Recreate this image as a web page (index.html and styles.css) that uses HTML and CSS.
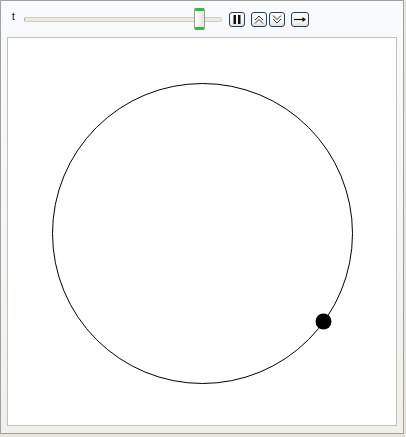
FILE: index.html
```html
<!DOCTYPE html>
<html>
<head>
<meta charset="utf-8">
<link rel="stylesheet" href="styles.css">
</head>
<body>
<div class="panel">
  <div class="controls">
    <span class="label">t</span>
    <div class="slider">
      <div class="track"></div>
      <div class="thumb"></div>
    </div>
    <button class="btn pause" aria-label="pause">
      <svg width="14" height="13" viewBox="0 0 14 13"><rect x="3.5" y="2" width="2.5" height="9" fill="#111"/><rect x="8" y="2" width="2.5" height="9" fill="#111"/></svg>
    </button>
    <button class="btn up" aria-label="faster">
      <svg width="14" height="13" viewBox="0 0 14 13"><path d="M3 7 L7 3 L11 7 M3 10.5 L7 6.5 L11 10.5" fill="none" stroke="#333" stroke-width="1"/></svg>
    </button>
    <button class="btn down" aria-label="slower">
      <svg width="14" height="13" viewBox="0 0 14 13"><path d="M3 2.5 L7 6.5 L11 2.5 M3 6 L7 10 L11 6" fill="none" stroke="#333" stroke-width="1"/></svg>
    </button>
    <button class="btn dir" aria-label="direction">
      <svg width="16" height="13" viewBox="0 0 16 13"><path d="M2 6.5 H12" stroke="#111" stroke-width="1.2"/><path d="M10.5 4 L14 6.5 L10.5 9 Z" fill="#111"/></svg>
    </button>
  </div>
  <div class="view">
    <svg width="388" height="387" viewBox="0 0 388 387">
      <circle cx="194.5" cy="195.5" r="150" fill="none" stroke="#000" stroke-width="1"/>
      <circle cx="315.5" cy="283.5" r="8" fill="#000"/>
    </svg>
  </div>
</div>
</body>
</html>
```
FILE: styles.css
```css
html, body {
  margin: 0;
  padding: 0;
}
body {
  background: #e8e6da;
  width: 406px;
  height: 437px;
  font-family: "Liberation Sans", Arial, sans-serif;
}
.panel {
  width: 402px;
  height: 432px;
  border: 1px solid #9ba2a6;
  background: linear-gradient(#f9fafd 0%, #f6f6f5 50%, #f1f0ea 100%);
  display: flex;
  flex-direction: column;
}
.controls {
  height: 36px;
  display: flex;
  align-items: center;
  padding-left: 11px;
}
.label {
  font-size: 10px;
  color: #000;
  width: 12px;
  margin-top: -6px;
}
.slider {
  position: relative;
  width: 198px;
  height: 23px;
  display: flex;
  align-items: center;
}
.track {
  width: 198px;
  height: 3px;
  background: #ecebdf;
  border: 1px solid #cfcdc0;
  border-left-color: #a8a8a0;
  border-radius: 2px;
  box-sizing: border-box;
  height: 5px;
}
.thumb {
  position: absolute;
  left: 170px;
  top: 0;
  width: 11px;
  height: 22px;
  box-sizing: border-box;
  border: 1px solid #9a9a90;
  border-top: 3px solid #2fbf3a;
  border-bottom: 3px solid #2fbf3a;
  border-radius: 2px;
  background: linear-gradient(90deg, #ffffff, #f1f1ec 60%, #e4e3dc);
}
.btn {
  box-sizing: border-box;
  width: 16px;
  height: 15px;
  padding: 0;
  border: 1px solid #1f3f72;
  border-radius: 3px;
  background: linear-gradient(#ffffff, #f2f2ee 70%, #e3e2da);
  display: flex;
  align-items: center;
  justify-content: center;
}
.pause { margin-left: 7px; }
.up { margin-left: 6px; }
.down { margin-left: 2px; }
.dir { margin-left: 6px; width: 18px; }
.view {
  margin-left: 6px;
  width: 390px;
  height: 389px;
  box-sizing: border-box;
  border: 1px solid #c2c2bc;
  background: #fff;
}
.view svg { display: block; }
```
